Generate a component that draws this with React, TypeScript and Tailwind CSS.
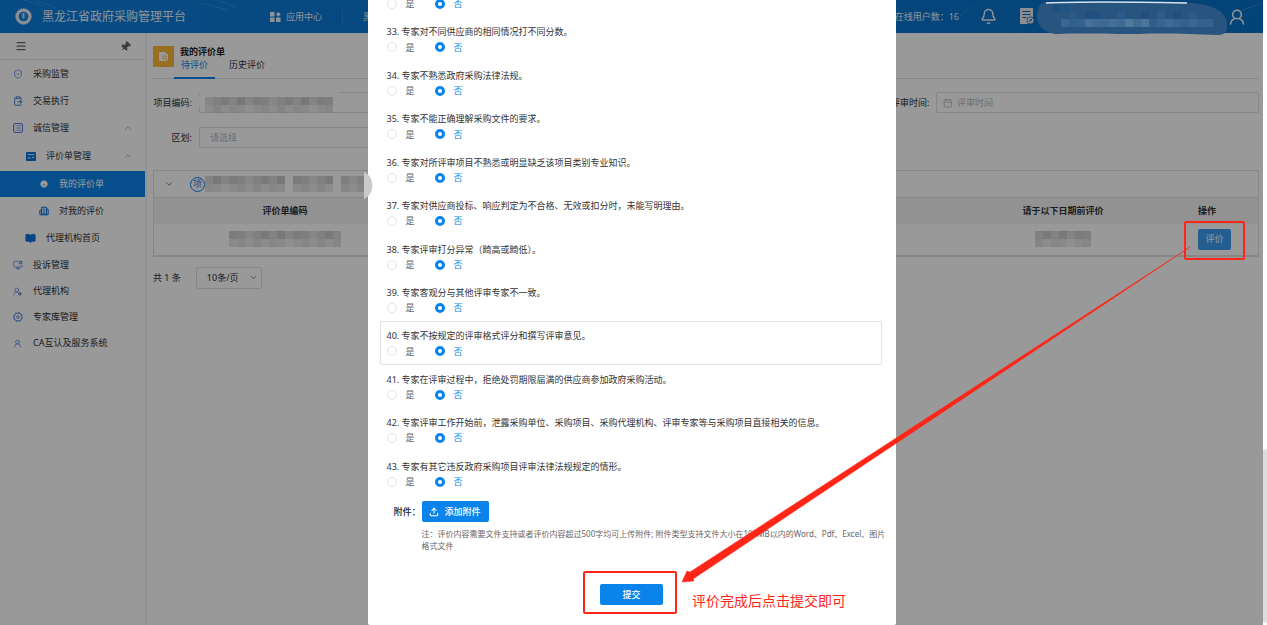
import { useState, type ReactNode } from 'react'
import {
  Bell, BookOpen, Building2, Calendar, ChevronDown, ChevronUp, ClipboardPaste,
  List, Menu, MonitorCog, Pin, ShieldCheck, Upload, UserRound, UserRoundCog,
} from 'lucide-react'

interface Question {
  no: number
  text: string
}

const QUESTIONS: Question[] = [
  { no: 32, text: '' },
  { no: 33, text: '专家对不同供应商的相同情况打不同分数。' },
  { no: 34, text: '专家不熟悉政府采购法律法规。' },
  { no: 35, text: '专家不能正确理解采购文件的要求。' },
  { no: 36, text: '专家对所评审项目不熟悉或明显缺乏该项目类别专业知识。' },
  { no: 37, text: '专家对供应商投标、响应判定为不合格、无效或扣分时，未能写明理由。' },
  { no: 38, text: '专家评审打分异常（畸高或畸低）。' },
  { no: 39, text: '专家客观分与其他评审专家不一致。' },
  { no: 40, text: '专家不按规定的评审格式评分和撰写评审意见。' },
  { no: 41, text: '专家在评审过程中，拒绝处罚期限届满的供应商参加政府采购活动。' },
  { no: 42, text: '专家评审工作开始前，泄露采购单位、采购项目、采购代理机构、评审专家等与采购项目直接相关的信息。' },
  { no: 43, text: '专家有其它违反政府采购项目评审法律法规规定的情形。' },
]

// Greys for the blocks that hide private values
const SHADES = ['#e2e2e2', '#dadada', '#cecece', '#d6d6d6', '#c8c8c8', '#d2d2d2', '#cccccc', '#dcdcdc']

function Mosaic({ cols, seed = 0 }: { cols: number; seed?: number }) {
  return (
    <span aria-hidden className="flex flex-none flex-col">
      {[0, 1].map(row => (
        <span key={row} className="flex">
          {Array.from({ length: cols }, (_, i) => (
            <span key={i} className={`size-2 ${row === 1 ? 'opacity-60' : ''}`}
              style={{ backgroundColor: SHADES[(i * 3 + seed + row) % SHADES.length] }} />
          ))}
        </span>
      ))}
    </span>
  )
}

function NavItem({ icon, label, level = 1, open, active }: {
  icon: ReactNode
  label: string
  level?: 1 | 2 | 3
  open?: boolean
  active?: boolean
}) {
  const pad = level === 1 ? 'pl-3' : level === 2 ? 'pl-[25px]' : 'pl-[38px]'
  return (
    <li>
      <a href="#" aria-current={active ? 'page' : undefined}
        className={`flex h-[26px] items-center gap-[10px] pr-3 ${pad} ${active ? 'bg-[#0a84ea] text-white' : 'text-[#303133]'}`}>
        <span className={`flex w-[11px] flex-none justify-center ${active ? 'text-white' : level === 1 ? 'text-[#5a86dd]' : 'text-[#0a74dc]'}`}>
          {icon}
        </span>
        <span className="flex-1">{label}</span>
        {open && <ChevronUp size={10} strokeWidth={1.5} className="text-[#888]" />}
      </a>
    </li>
  )
}

function Logo() {
  return (
    <svg width="17" height="17" viewBox="0 0 17 17" aria-hidden>
      <circle cx="8.5" cy="8.5" r="6.3" fill="none" stroke="#e8eef5" strokeWidth="3" />
      <circle cx="8.5" cy="8.5" r="7.8" fill="none" stroke="#e8eef5" strokeWidth="1" strokeDasharray="1.4 1" />
      <path d="M6.8 5.6h3.400v3.600L8.500 11.600 6.800 9.200z" fill="none" stroke="#8fb8e0" strokeWidth="0.8" />
      <path d="M8.5 5.500v4.500" stroke="#e8eef5" strokeWidth="1.4" />
    </svg>
  )
}

function FormIcon() {
  return (
    <svg width="10" height="9" viewBox="0 0 10 9" aria-hidden>
      <rect width="10" height="9" rx="1" fill="#0a74dc" />
      <path d="M1.500 2.500h7M1.500 6h3.500M6 5l1 1 1.500-1.500" fill="none" stroke="#d6e8fa" />
    </svg>
  )
}

function BadgeIcon() {
  return (
    <svg width="8" height="8" viewBox="0 0 8 8" aria-hidden>
      <circle cx="4" cy="4" r="3.200" fill="#fff" />
      <circle cx="4" cy="4" r="3.300" fill="none" stroke="#fff" strokeDasharray="1.300 0.800" />
      <path d="M2.600 4.700q1.400 1 2.800 0" fill="none" stroke="#0a84ea" strokeWidth="0.6" />
    </svg>
  )
}

function GearIcon() {
  return (
    <svg width="10" height="10" viewBox="0 0 10 10" fill="none" stroke="currentColor" aria-hidden>
      <circle cx="5" cy="5" r="4" strokeWidth="0.900" />
      <circle cx="5" cy="5" r="4.500" strokeWidth="0.900" strokeDasharray="1.700 1.800" />
      <circle cx="5" cy="5" r="1.200" />
    </svg>
  )
}

function Header() {
  return (
    <header className="relative flex h-[33px] flex-none items-center bg-gradient-to-r from-[#0b7fdd] to-[#0870c8] text-[#eef3f8]">
      <svg className="absolute inset-0 size-full" aria-hidden>
        <g stroke="#7fb7ea" strokeOpacity="0.3" fill="none">
          <path d="M24 0 42 6M34 0 56 8M202 3 228 10M216 0 236 7M960 16 972 6M1238 12 1262 3" />
        </g>
      </svg>
      <div className="relative flex w-[343px] items-center pl-[15px]">
        <Logo />
        <h1 className="ml-[10px] flex-1 text-xs">黑龙江省政府采购管理平台</h1>
        <a href="#" className="flex items-center gap-[5px] pr-5">
          <svg width="11" height="10" viewBox="0 0 11 10" fill="currentColor" aria-hidden>
            <path d="M0 0h4.500v4.500H0zM0 5.500h4.500V10H0zM6 5.500h4.500V10H6zM8.300 0l2.400 2.300-2.400 2.400-2.400-2.400z" />
          </svg>
          应用中心
        </a>
        <span className="h-4 border-l border-[#2a8ae0]" />
      </div>
      <a href="#" className="relative pl-5">黑龙江省</a>
      <div className="relative ml-auto flex items-center pr-[18px]">
        <span className="mr-[21px]">在线用户数：16</span>
        <button type="button" aria-label="消息"><Bell size={17} strokeWidth={2} /></button>
        <button type="button" aria-label="待办" className="ml-[22px]">
          <svg width="16" height="17" viewBox="0 0 16 17" aria-hidden>
            <path d="M1 0h13v9l-4 7H1z" fill="#e6edf4" />
            <path d="M3.500 3.500h8M3.500 6.500h8M3.500 9.500h4" stroke="#0c66b4" />
            <circle cx="11.500" cy="12.500" r="3.600" fill="#e6edf4" stroke="#0c66b4" strokeWidth="0.8" />
            <path d="m10 14 1-2.400 2.200-.8-1 2.300z" fill="#0c66b4" />
          </svg>
        </button>
        <button type="button" aria-label="账户" className="ml-[194px]">
          <svg width="16" height="16" viewBox="0 0 16 16" fill="none" stroke="currentColor" strokeWidth="1.600" strokeLinecap="round" aria-hidden>
            <circle cx="8" cy="5.500" r="4.300" />
            <path d="M1.500 15c.4-2.800 2-4.600 4.500-5.500M14.500 15c-.4-2.800-2-4.600-4.500-5.500" />
          </svg>
        </button>
      </div>
    </header>
  )
}

function Sidebar() {
  return (
    <aside className="w-[147px] flex-none border-r-2 border-[#f0f3f5]">
      <div className="flex h-[27px] items-center justify-between border-b border-[#e8e8e8] pl-[15px] pr-3.5 text-[#666]">
        <Menu size={12} strokeWidth={2.5} />
        <Pin size={11} fill="currentColor" className="rotate-45" />
      </div>
      <nav>
        <ul className="flex flex-col gap-px pt-px">
          <NavItem icon={<ShieldCheck size={10} />} label="采购监管" />
          <NavItem icon={<ClipboardPaste size={10} strokeWidth={2.5} />} label="交易执行" />
          <NavItem icon={<List size={10} className="rounded-xs border" />} label="诚信管理" open />
        </ul>
        <ul className="pt-0.5">
          <NavItem icon={<FormIcon />} label="评价单管理" level={2} open />
        </ul>
        <ul className="flex flex-col gap-px pt-0.5">
          <NavItem icon={<BadgeIcon />} label="我的评价单" level={3} active />
          <NavItem icon={<Building2 size={10} strokeWidth={2.5} />} label="对我的评价" level={3} />
          <NavItem icon={<BookOpen size={11} fill="#0a74dc" />} label="代理机构首页" level={2} />
        </ul>
        <ul className="pt-px">
          <NavItem icon={<MonitorCog size={10} />} label="投诉管理" />
          <NavItem icon={<UserRoundCog size={9} />} label="代理机构" />
          <NavItem icon={<GearIcon />} label="专家库管理" />
          <NavItem icon={<UserRound size={9} />} label="CA互认及服务系统" />
        </ul>
      </nav>
    </aside>
  )
}

function Main() {
  return (
    <main className="min-w-0 flex-1 pl-1.5 pr-1">
      <div className="flex h-[46px] border-b border-[#e2e2e2] pt-[13px]">
        <span className="flex size-[21px] items-center justify-center bg-[#fcb93b]">
          <svg width="10" height="10" viewBox="0 0 10 10" aria-hidden>
            <path d="M0 1q0-1 1-1h5l3 3v6H1Q0 9 0 8z" fill="#fff" />
            <circle cx="5.500" cy="5.500" r="1.800" fill="none" stroke="#fcb93b" />
            <path d="M6.800 6.800 9 9" stroke="#fcb93b" />
          </svg>
        </span>
        <div>
          <h2 className="ml-1.5 h-3 font-bold leading-3 text-[#1d1d1d]">我的评价单</h2>
          <div role="tablist" className="flex">
            <button type="button" role="tab" aria-selected className="h-[21px] w-[41px] border-b-2 border-[#0a84ea] pb-2 text-[#0a84ea]">待评价</button>
            <button type="button" role="tab" aria-selected={false} className="ml-3.5 h-[21px] pb-2 text-[#303133]">历史评价</button>
          </div>
        </div>
      </div>

      <form className="grid grid-cols-3 gap-y-3.5 pt-[13px]">
        <div className="flex items-center">
          <label htmlFor="code" className="w-[39px] text-right">项目编码:</label>
          <div className="relative ml-[7px] flex-1">
            <input id="code" className="h-[21px] w-full rounded-xs border border-[#dcdfe6]" />
            <span className="absolute -top-0.5 left-0 flex h-[22px] w-[142px] items-center rounded-lg bg-white pl-1.5 pt-2"><Mosaic cols={16} /></span>
          </div>
        </div>
        <div />
        <div className="flex items-center">
          <label htmlFor="time" className="w-[39px] whitespace-nowrap text-right">评审时间:</label>
          <div className="ml-[7px] flex h-[21px] flex-1 items-center gap-1 rounded-xs border border-[#dcdfe6] px-1.5 text-[#b4b8bf]">
            <Calendar size={10} />
            <input id="time" placeholder="评审时间" className="w-full placeholder:text-[#b4b8bf] outline-none" />
          </div>
        </div>
        <div className="flex items-center">
          <label htmlFor="area" className="w-[39px] text-right">区划:</label>
          <input id="area" placeholder="请选择" className="ml-[7px] h-[21px] flex-1 rounded-xs border border-[#dcdfe6] px-[10px] placeholder:text-[#b4b8bf]" />
        </div>
      </form>

      <section className="mt-[22px] border border-b-2 border-[#e2e2e2]">
        <div className="flex h-[26px] items-center pl-2.5">
          <ChevronDown size={10} strokeWidth={1.5} />
          <span className="ml-4 flex size-[15px] flex-none items-center justify-center rounded-full border border-[#0a84ea] text-[#0a84ea]">项</span>
          <span className="flex gap-2">
            <Mosaic cols={10} seed={1} />
            <Mosaic cols={5} seed={2} />
            <Mosaic cols={4} seed={5} />
          </span>
        </div>
        <table className="w-full table-fixed">
          <thead>
            <tr className="h-[26px] border-t border-[#e2e2e2] bg-[#f3f3f3]">
              <th className="w-[262px] font-bold">评价单编码</th>
              <th />
              <th className="w-[190px] font-bold">请于以下日期前评价</th>
              <th className="w-[100px] pl-10 text-left font-bold">操作</th>
            </tr>
          </thead>
          <tbody>
            <tr className="h-[31px]">
              <td><span className="flex justify-center"><Mosaic cols={14} seed={2} /></span></td>
              <td />
              <td><span className="flex justify-center"><Mosaic cols={7} seed={3} /></span></td>
              <td className="pl-10"><button type="button" className="h-[21px] w-[33px] rounded-xs bg-[#3d9df0] text-white">评价</button></td>
            </tr>
          </tbody>
        </table>
      </section>

      <div className="mt-2.5 flex items-center gap-[15px]">
        <span>共 1 条</span>
        <span className="relative">
          <select aria-label="每页条数" className="h-[22px] w-[66px] appearance-none rounded-xs border border-[#dcdfe6] pl-[10px]">
            <option>10条/页</option>
          </select>
          <ChevronDown size={9} strokeWidth={1.5} className="pointer-events-none absolute right-1 top-1.5" />
        </span>
      </div>
    </main>
  )
}

function QuestionItem({ q, value, onChange }: { q: Question; value: string; onChange: (v: string) => void }) {
  const radio = 'size-[10px] appearance-none rounded-full border border-[#e2e4e8] bg-white checked:border-[3px] checked:border-[#0a84ea]'
  return (
    <fieldset className={`min-h-0 flex-1 basis-0 rounded-xs border px-1.5 pt-2 ${q.no === 40 ? 'border-[#e2e2e2]' : 'border-transparent'}`}>
      <p className="h-3 whitespace-nowrap leading-3">{q.text && `${q.no}. ${q.text}`}</p>
      <div className="mt-0.5 flex h-3.5 items-center">
        {['是', '否'].map(v => (
          <label key={v} className={`flex w-12 items-center gap-[9px] ${value === v ? 'text-[#0a84ea]' : 'text-[#606266]'}`}>
            <input type="radio" name={`q${q.no}`} checked={value === v} onChange={() => onChange(v)} className={radio} />
            {v}
          </label>
        ))}
      </div>
    </fieldset>
  )
}

function ReviewDialog() {
  const [answers, setAnswers] = useState<Record<number, string>>({})

  return (
    <div className="absolute inset-0 flex justify-center bg-black/40">
      <div role="dialog" aria-label="评价" className="flex w-[528px] flex-col overflow-hidden rounded-b-xs bg-white text-[#333]">
        <div className="-mt-[26px] flex flex-1 flex-col pl-3 pr-3.5">
          {QUESTIONS.map(q => (
            <QuestionItem key={q.no} q={q} value={answers[q.no] ?? '否'}
              onChange={v => setAnswers(a => ({ ...a, [q.no]: v }))} />
          ))}
        </div>
        <div className="h-[130px] flex-none pt-1.5">
          <div className="flex items-center pl-[26px]">
            <span className="w-7 font-medium text-[#222]">附件：</span>
            <button type="button" className="flex h-[21px] w-[67px] items-center justify-center gap-[5px] rounded-xs bg-[#0a84ea] font-medium text-white">
              <Upload size={10} strokeWidth={2.5} />
              添加附件
            </button>
          </div>
          <p className="mt-1.5 pl-[54px] pr-2 text-[8px] leading-3 text-[#666]">
            注：评价内容需要文件支持或者评价内容超过500字均可上传附件; 附件类型支持文件大小在100MB以内的Word、Pdf、Excel、图片格式文件
          </p>
          <div className="mt-8 flex justify-center">
            <button type="button" className="h-[21px] w-[63px] rounded-xs bg-[#0a84ea] font-medium text-white">提交</button>
          </div>
        </div>
      </div>
    </div>
  )
}

const HEADER_BLOCKS: [number, number, string][] = [
  [1053, 3, '#1d4f80'], [1061, 3, '#1f5585'], [1069, 11, '#275a89'], [1085, 11, '#234f7c'], [1093, 11, '#1f5283'],
  [1117, 11, '#285b8b'], [1141, 11, '#224f7e'], [1157, 11, '#2b5c8a'], [1173, 11, '#234f7c'], [1189, 11, '#285987'],
  [1061, 19, '#3c6690'], [1069, 19, '#2f5f8b'], [1077, 19, '#33628c'], [1085, 19, '#466f97'], [1093, 19, '#416b94'],
  [1101, 19, '#3e6992'], [1109, 19, '#466f97'], [1117, 19, '#3f6a93'], [1125, 19, '#4f789d'], [1133, 19, '#436d95'],
  [1141, 19, '#4c759b'], [1149, 19, '#2f5f8b'], [1157, 19, '#396590'], [1165, 19, '#3f6a93'], [1173, 19, '#396590'],
  [1181, 19, '#33628c'], [1189, 19, '#396590'], [1197, 19, '#33628c'], [1205, 19, '#36628e'],
]

// Hand-drawn notes that lie over the whole screen
function Annotations() {
  return (
    <div className="pointer-events-none absolute inset-0">
      <svg className="absolute inset-0 size-full" aria-hidden>
        <path d="M1046 2h136c20 2 45 3 45 24 0 6-3 9-9 9-30-1-50-2-80-1-40 0-60-1-80 0-13 0-21-8-21-17s3-15 9-15z" fill="#28557f" />
        {HEADER_BLOCKS.map(([x, y, fill]) => <rect key={`${x}-${y}`} x={x} y={y} width="8" height="8" fill={fill} />)}
        <path d="M1046 3c40-2 90-1 141 0" fill="none" stroke="#d7e2ed" strokeWidth="1.5" />
        <path d="M364 172c11 4 11 23 0 27z" fill="#cacaca" />
        <path d="M1190 247 690 572l-3-1-5 11 12-1-1-2z" fill="#ff2617" stroke="#ff2617" strokeWidth="0.5" />
        <rect x="1185" y="222" width="59" height="37" rx="1" fill="none" stroke="#ff2617" strokeWidth="2" />
        <rect x="584" y="572" width="92" height="41" rx="1" fill="none" stroke="#ff2617" strokeWidth="2" />
      </svg>
      <p className="absolute left-[692px] top-[591px] text-sm text-[#ff2617]">评价完成后点击提交即可</p>
    </div>
  )
}

export default function App() {
  return (
    <div className="relative flex h-screen overflow-hidden bg-white font-['Noto_Sans','Noto_Sans_CJK_SC',sans-serif] text-[9px] text-[#303133]">
      <div className="relative flex min-w-0 flex-1 flex-col">
        <Header />
        <div className="flex min-h-0 flex-1">
          <Sidebar />
          <Main />
        </div>
        <ReviewDialog />
      </div>
      <div className="flex w-1 flex-none flex-col justify-end bg-white pb-0.5">
        <span className="h-[174px] rounded-xs bg-[#dddddd]" />
      </div>
      <Annotations />
    </div>
  )
}
